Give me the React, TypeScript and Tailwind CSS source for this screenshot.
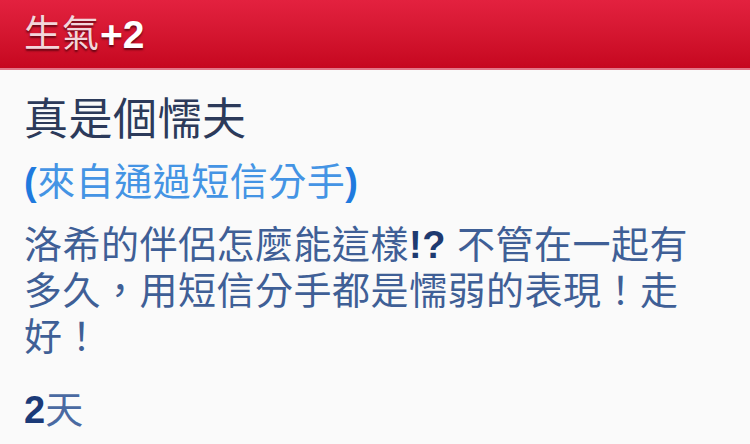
import React from "react"

const font = { fontFamily: '"Liberation Sans", "Noto Sans CJK TC", sans-serif' }

export default function App() {
  return (
    <div className="w-[750px] h-[444px] overflow-hidden bg-[#fafafa]" style={font}>
      {/* red title bar */}
      <div className="h-[70px] flex items-center px-6 bg-gradient-to-b from-[#e3213f] to-[#c6061f] border-b-2 border-[#e27688]">
        <span className="text-[37px] leading-none text-[#f3d6db] [text-shadow:0_2px_2px_rgba(60,0,10,0.7)] tracking-[1px]">
          生氣
        </span>
        <span className="text-[39px] leading-none font-bold text-white [text-shadow:0_2px_2px_rgba(60,0,10,0.7)]">
          +2
        </span>
      </div>

      <div className="px-6 pt-[24px]">
        <h1 className="text-[44px] leading-[52px] text-[#2c3a5a] tracking-[0.5px]">真是個懦夫</h1>

        <p className="mt-[13px] text-[38px] leading-[46px] text-[#4494e4] tracking-[0.5px]">
          <span className="font-bold text-[#1f7ade]">(</span>來自通過短信分手<span className="font-bold text-[#1f7ade]">)</span>
        </p>

        <p className="mt-[17px] text-[38px] leading-[46px] text-[#3f5f96] tracking-[0.5px]">
          洛希的伴侶怎麼能這樣<span className="font-bold text-[#1e3a70]">!?</span> 不管在一起有多久，用短信分手都是懦弱的表現！走好！
        </p>

        <p className="mt-[27px] text-[38px] leading-[46px] text-[#4a6aa2]">
          <span className="font-bold text-[#1b3a78]">2</span>天
        </p>
      </div>
    </div>
  )
}
